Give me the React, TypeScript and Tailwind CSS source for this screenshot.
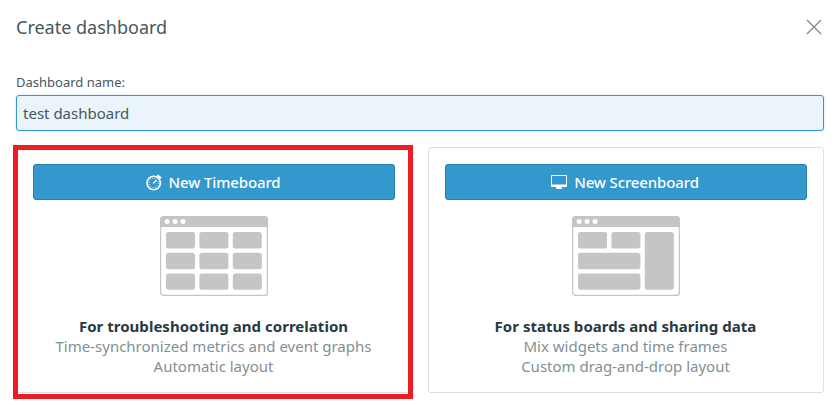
import type { ReactNode } from 'react';

function StopwatchIcon() {
  return (
    <svg width="16" height="17" viewBox="0 0 16 17" fill="none" stroke="white" className="block shrink-0">
      <circle cx="7.7" cy="9" r="6.7" strokeWidth="1.6" />
      <circle cx="7.7" cy="9" r="4.7" strokeWidth="1" strokeDasharray="0.9 1.56" />
      <path d="M7.2 9.5L10.4 6.3" strokeWidth="1.3" />
      <path d="M11.4 1.3L15 4.2" strokeWidth="2" />
      <path d="M12 4.4L13.8 2.4" strokeWidth="1.8" />
    </svg>
  );
}

function MonitorIcon() {
  return (
    <svg width="16" height="16" viewBox="0 0 16 16" fill="white" className="block shrink-0">
      <path fillRule="evenodd" d="M1 1H15Q16 1 16 2V12Q16 13 15 13H10.5V14L11.5 15H4.5L5.5 14V13H1Q0 13 0 12V2Q0 1 1 1ZM1 2V10.4H15V2Z" />
    </svg>
  );
}

function BoardPicture({ tiles }: { tiles: number[][] }) {
  return (
    <svg width="108" height="80" viewBox="0 0 108 80" className="mx-auto mt-4 block">
      <rect x="0.6" y="0.6" width="106.8" height="78.8" rx="3" fill="white" stroke="#c5c5c5" strokeWidth="1.2" />
      <path d="M0 11V4Q0 0 4 0H104Q108 0 108 4V11Z" fill="#c5c5c5" />
      {[7.2, 15.1, 23].map((x) => (
        <circle key={x} cx={x} cy="5.6" r="2.5" fill="white" />
      ))}
      {tiles.map(([x, y, w, h]) => (
        <rect key={`${x}-${y}`} x={x} y={y} width={w} height={h} rx="2.5" fill="#c5c5c5" />
      ))}
    </svg>
  );
}

const timeTiles = [16, 36.8, 57.4].flatMap((y) => [6, 39.4, 72.8].map((x) => [x, y, 29, 16.4]));
const screenTiles = [
  [6, 16, 29, 16.4],
  [39.4, 16, 29, 16.4],
  [72.8, 16, 29, 57.8],
  [6, 36.8, 62.4, 16.4],
  [6, 57.4, 62.4, 16.4],
];

type CardProps = {
  icon: ReactNode;
  action: string;
  tiles: number[][];
  title: string;
  lines: string[];
};

function Card({ icon, action, tiles, title, lines }: CardProps) {
  return (
    <div className="h-[246px] w-[396px] rounded-[3px] border border-[#dcdde1] px-4 pt-4 text-center text-[15px] leading-5">
      <button className="flex h-9 w-full items-center justify-center gap-[7px] rounded-[3px] border border-[#2a7fab] bg-[#3398cd] pr-[2px] font-medium tracking-[-0.13px] text-white">
        {icon}
        <span>{action}</span>
      </button>
      <BoardPicture tiles={tiles} />
      <div className="mt-5 pr-px font-bold tracking-[0.03px] text-[#283942]">{title}</div>
      {lines.map((line) => (
        <div key={line} className="pr-px text-[#838f95]">{line}</div>
      ))}
    </div>
  );
}

export default function App() {
  return (
    <main className="h-[405px] w-[839px] overflow-hidden bg-white pl-4 pr-[15px] pt-[14px] font-['Noto_Sans','Open_Sans',sans-serif] text-[#465760]">
      <header className="flex h-[26px] items-center justify-between">
        <h1 className="text-[18px] leading-[26px]">Create dashboard</h1>
        <button aria-label="Close" className="mr-[2px]">
          <svg width="16" height="16" viewBox="0 0 16 16" fill="none" stroke="#7e8b91" strokeWidth="1.4">
            <path d="M1 1L15 15M15 1L1 15" />
          </svg>
        </button>
      </header>
      <label htmlFor="name" className="mt-8 block text-[13px] leading-5">Dashboard name:</label>
      <input
        id="name"
        defaultValue="test dashboard"
        className="mt-[3px] block h-9 w-full rounded-[3px] border border-[#3398cd] bg-[#ebf4fa] px-[6px] text-[15px] shadow-[0_0_3px_#3398cd40] outline-none"
      />
      <div className="mt-4 flex gap-4">
        <div className="relative">
          <Card
            icon={<StopwatchIcon />}
            action="New Timeboard"
            tiles={timeTiles}
            title="For troubleshooting and correlation"
            lines={['Time-synchronized metrics and event graphs', 'Automatic layout']}
          />
          <div className="pointer-events-none absolute -left-[3px] -top-[2px] h-[254px] w-[400px] border-[5px] border-[#ed1c24]" />
        </div>
        <Card
          icon={<MonitorIcon />}
          action="New Screenboard"
          tiles={screenTiles}
          title="For status boards and sharing data"
          lines={['Mix widgets and time frames', 'Custom drag-and-drop layout']}
        />
      </div>
    </main>
  );
}
